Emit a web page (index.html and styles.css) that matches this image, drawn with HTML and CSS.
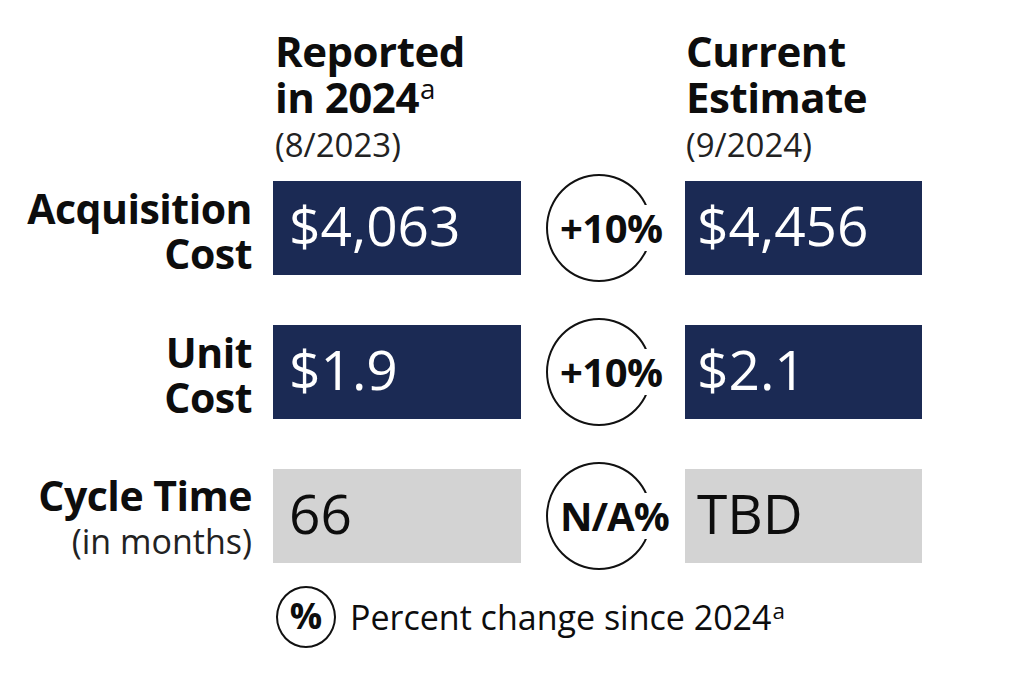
FILE: index.html
```html
<!DOCTYPE html>
<html lang="en">
<head>
<meta charset="utf-8">
<title>Cost and schedule comparison</title>
<link rel="stylesheet" href="styles.css">
</head>
<body>
<div class="chart">
  <div class="grid head">
    <div class="hcell c2">
      <div class="htitle">Reported<br>in 2024<span class="sup">a</span></div>
      <div class="hsub">(8/2023)</div>
    </div>
    <div class="hcell c4">
      <div class="htitle">Current<br>Estimate</div>
      <div class="hsub">(9/2024)</div>
    </div>
  </div>
  <div class="grid rows">
    <div class="label"><span class="lb">Acquisition<br>Cost</span></div>
    <div class="box navy left">$4,063</div>
    <div class="change"><div class="ring"></div><span class="pct">+10%</span></div>
    <div class="box navy right">$4,456</div>

    <div class="label"><span class="lb">Unit<br>Cost</span></div>
    <div class="box navy left">$1.9</div>
    <div class="change"><div class="ring"></div><span class="pct">+10%</span></div>
    <div class="box navy right">$2.1</div>

    <div class="label"><span class="lb">Cycle Time</span><span class="lsub">(in months)</span></div>
    <div class="box gray left">66</div>
    <div class="change"><div class="ring"></div><span class="pct na">N/A%</span></div>
    <div class="box gray right">TBD</div>
  </div>
  <div class="legend">
    <span class="ring-sm">%</span>
    <span class="legend-text">Percent change since 2024<span class="sup">a</span></span>
  </div>
</div>
</body>
</html>
```
FILE: styles.css
```css
html, body {
  margin: 0;
  padding: 0;
  background: #ffffff;
}
body {
  font-family: "Open Sans", "Noto Sans", sans-serif;
  color: #0d0d0d;
}
.chart {
  padding-top: 28px;
}
.grid {
  display: grid;
  grid-template-columns: 273px 248px 164px 237px;
}
.head {
  margin-bottom: 11px;
}
.c2 {
  grid-column: 2;
  padding-left: 2px;
}
.c4 {
  grid-column: 4;
  padding-left: 1px;
}
.htitle {
  font-weight: 700;
  font-size: 42px;
  line-height: 46px;
  letter-spacing: -0.5px;
}
.hsub {
  font-weight: 400;
  font-size: 33px;
  line-height: 50px;
  color: #222;
}
.sup {
  font-weight: 400;
  font-size: 0.66em;
  vertical-align: 0.5em;
  line-height: 0;
  margin-left: 1px;
  letter-spacing: 0;
}
.rows {
  grid-auto-rows: 94px;
  row-gap: 50px;
}
.label {
  display: flex;
  flex-direction: column;
  justify-content: center;
  align-items: flex-end;
  padding-right: 21px;
  text-align: right;
  padding-top: 6px;
}
.lb {
  font-weight: 700;
  font-size: 41px;
  line-height: 45px;
  letter-spacing: -0.5px;
}
.lsub {
  font-weight: 400;
  font-size: 34px;
  line-height: 47px;
  color: #222;
}
.box {
  display: flex;
  align-items: center;
  font-size: 55px;
  line-height: 55px;
  padding-bottom: 8px;
  box-sizing: border-box;
}
.box.left {
  padding-left: 16px;
}
.box.right {
  padding-left: 12px;
}
.navy {
  background: #1b2a54;
  color: #ffffff;
}
.gray {
  background: #d3d3d3;
  color: #0d0d0d;
}
.change {
  position: relative;
  display: flex;
  align-items: center;
  justify-content: center;
}
.ring {
  width: 106px;
  height: 108px;
  box-sizing: border-box;
  border: 2px solid #111;
  border-radius: 50%;
  margin-left: -8px;
}
.pct {
  position: absolute;
  left: 38px;
  top: 50%;
  transform: translateY(-50%);
  background: #ffffff;
  font-weight: 700;
  font-size: 40px;
  line-height: 46px;
  letter-spacing: -0.5px;
  padding: 0 1px;
}
.pct.na {
  letter-spacing: -1px;
}
.legend {
  display: flex;
  align-items: center;
  gap: 14px;
  margin-top: 23px;
  margin-left: 276px;
}
.ring-sm {
  width: 60px;
  height: 62px;
  box-sizing: border-box;
  border: 2px solid #111;
  border-radius: 50%;
  display: flex;
  align-items: center;
  justify-content: center;
  font-weight: 700;
  font-size: 36px;
  line-height: 1;
  padding-bottom: 2px;
}
.legend-text {
  font-size: 34px;
  line-height: 44px;
}
```
